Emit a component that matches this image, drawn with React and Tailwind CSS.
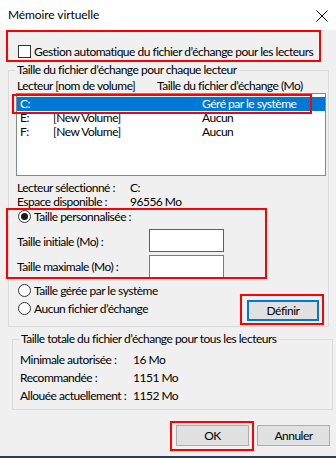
import React from 'react';

const font = { fontFamily: 'Lato, "Noto Sans", "Open Sans", sans-serif' };

function Radio({ checked }) {
  return (
    <span className="w-[13px] h-[13px] rounded-full border border-[#333] bg-white flex items-center justify-center shrink-0">
      {checked && <span className="w-[7px] h-[7px] rounded-full bg-[#1a1a1a]" />}
    </span>
  );
}

function Button({ children, focused }) {
  return (
    <button
      className={
        focused
          ? 'w-[72px] h-[21px] bg-[#e1e1e1] border-2 border-[#0078d7] text-[12px] leading-none text-black'
          : 'w-[73px] h-[21px] bg-[#e1e1e1] border border-[#adadad] text-[12px] leading-none text-black'
      }
    >
      {children}
    </button>
  );
}

export default function App() {
  return (
    <div className="relative w-[336px] h-[458px] bg-[#f0f0f0] overflow-hidden text-black text-[12px] tracking-[-0.5px] whitespace-nowrap" style={font}>
      {/* Title bar */}
      <div className="h-[30px] bg-white flex items-center justify-between pl-[8px] pr-[8px]">
        <span className="text-[12px] leading-none tracking-[-0.1px]">Mémoire virtuelle</span>
        <svg width="12" height="12" viewBox="0 0 12 12" className="mt-[1px]">
          <path d="M0.5 0.5 L11.5 11.5 M11.5 0.5 L0.5 11.5" stroke="#000" strokeWidth="1" />
        </svg>
      </div>

      {/* Automatic checkbox */}
      <div className="mt-[15px] ml-[18px] h-[13px] flex items-center gap-[3px]">
        <span className="w-[13px] h-[13px] border border-[#333] bg-white shrink-0" />
        <span className="leading-[13px]">Gestion automatique du fichier d’échange pour les lecteurs</span>
      </div>

      {/* Per-drive group */}
      <fieldset className="mt-[4px] ml-[8px] w-[321px] h-[265px] border border-[#dcdcdc]">
        <legend className="ml-[6px] px-[2px] leading-[16px]">Taille du fichier d’échange pour chaque lecteur</legend>
        <div className="mt-[1px] h-[14px] leading-[14px] flex">
          <span className="ml-[8px] w-[140px]">Lecteur [nom de volume]</span>
          <span>Taille du fichier d’échange (Mo)</span>
        </div>
        <div className="ml-[7px] w-[310px] h-[83px] border border-[#828790] bg-white pt-[3px]">
          <div className="h-[14px] leading-[14px] flex bg-[#0078d7] text-white">
            <span className="ml-[3px] w-[33px]">C:</span>
            <span className="w-[149px]"></span>
            <span>Géré par le système</span>
          </div>
          <div className="h-[14px] leading-[14px] flex">
            <span className="ml-[3px] w-[33px]">E:</span>
            <span className="w-[149px]">[New Volume]</span>
            <span>Aucun</span>
          </div>
          <div className="h-[14px] leading-[14px] flex">
            <span className="ml-[3px] w-[33px]">F:</span>
            <span className="w-[149px]">[New Volume]</span>
            <span>Aucun</span>
          </div>
        </div>

        <div className="mt-[5px] ml-[8px] flex flex-col leading-[14px]">
          <div className="h-[14px] flex">
            <span className="w-[113px]">Lecteur sélectionné :</span>
            <span>C:</span>
          </div>
          <div className="h-[14px] flex">
            <span className="w-[113px]">Espace disponible :</span>
            <span>96556 Mo</span>
          </div>
        </div>

        <div className="mt-[1px] ml-[9px] h-[13px] flex items-center gap-[3px]">
          <Radio checked />
          <span className="leading-[13px]">Taille personnalisée :</span>
        </div>
        <div className="mt-[6px] ml-[8px] h-[23px] flex items-center">
          <span className="w-[132px] pt-[2px]">Taille initiale (Mo) :</span>
          <span className="w-[75px] h-[23px] border border-[#0078d7] bg-white" />
        </div>
        <div className="mt-[3px] ml-[8px] h-[23px] flex items-center">
          <span className="w-[132px] pt-[1px]">Taille maximale (Mo) :</span>
          <span className="w-[75px] h-[23px] border border-[#7a7a7a] bg-white" />
        </div>

        <div className="mt-[6px] flex justify-between pr-[9px]">
          <div className="ml-[9px] flex flex-col gap-[5px]">
            <div className="h-[13px] flex items-center gap-[3px]">
              <Radio />
              <span className="leading-[13px]">Taille gérée par le système</span>
            </div>
            <div className="h-[13px] flex items-center gap-[3px]">
              <Radio />
              <span className="leading-[13px]">Aucun fichier d’échange</span>
            </div>
          </div>
          <div className="mt-[16px]">
            <Button focused>Définir</Button>
          </div>
        </div>
      </fieldset>

      {/* Totals group */}
      <fieldset className="mt-[4px] ml-[12px] w-[321px] h-[79px] border border-[#dcdcdc]">
        <legend className="ml-[6px] px-[2px] leading-[16px]">Taille totale du fichier d’échange pour tous les lecteurs</legend>
        <div className="mt-[6px] ml-[7px] flex flex-col gap-[5px] leading-[13px]">
          <div className="h-[13px] flex">
            <span className="w-[113px]">Minimale autorisée :</span>
            <span>16 Mo</span>
          </div>
          <div className="h-[13px] flex">
            <span className="w-[113px]">Recommandée :</span>
            <span>1151 Mo</span>
          </div>
          <div className="h-[13px] flex">
            <span className="w-[113px]">Allouée actuellement :</span>
            <span>1152 Mo</span>
          </div>
        </div>
      </fieldset>

      {/* Dialog buttons */}
      <div className="mt-[15px] pr-[6px] flex justify-end gap-[8px]">
        <Button>OK</Button>
        <Button>Annuler</Button>
      </div>

      <div className="absolute left-0 right-0 bottom-0 h-[2px] bg-[#2b3d52]" />

      {/* Red annotation boxes */}
      <div className="absolute left-[6px] top-[30px] w-[315px] h-[32px] border-2 border-[#ff0000]" />
      <div className="absolute left-[12px] top-[94px] w-[300px] h-[20px] border-2 border-[#ff0000]" />
      <div className="absolute left-[6px] top-[208px] w-[261px] h-[71px] border-2 border-[#ff0000]" />
      <div className="absolute left-[240px] top-[294px] w-[84px] h-[31px] border-2 border-[#ff0000]" />
      <div className="absolute left-[170px] top-[421px] w-[84px] h-[30px] border-2 border-[#ff0000]" />
    </div>
  );
}
